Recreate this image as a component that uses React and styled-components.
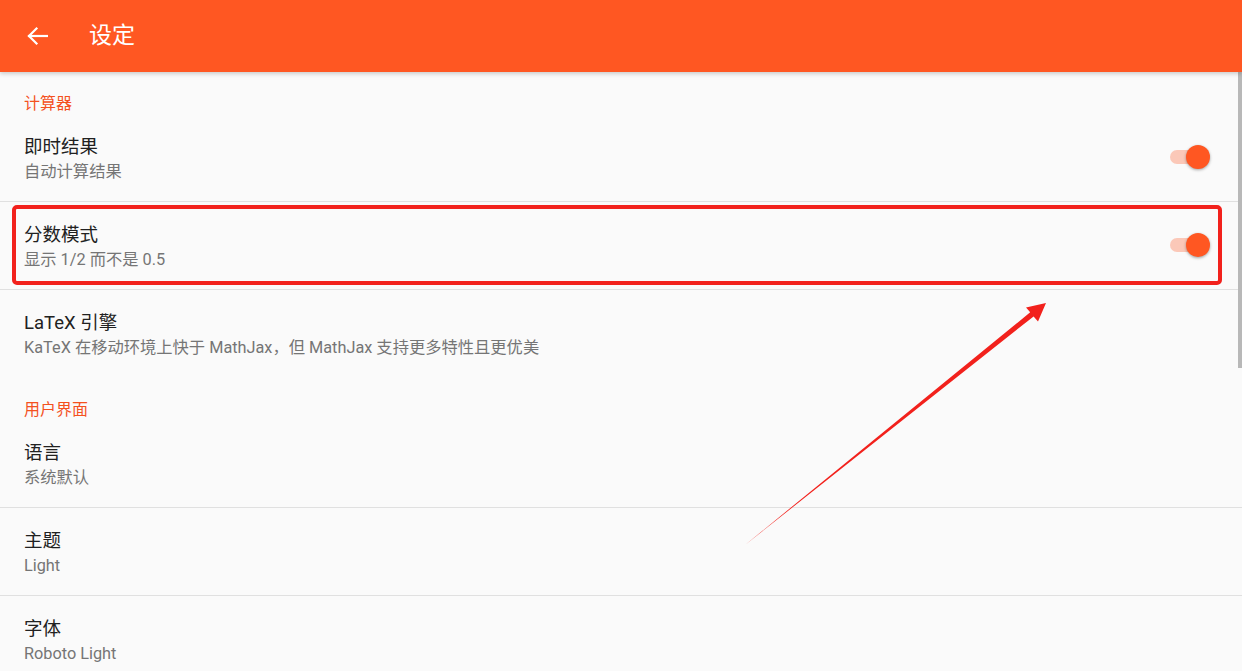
import React from 'react';
import styled, {createGlobalStyle} from 'styled-components';

const GlobalStyle = createGlobalStyle`
  html, body {
    margin: 0;
    padding: 0;
    background: #fafafa;
    overflow: hidden;
  }
  body {
    font-family: Roboto, "Noto Sans CJK SC", "Noto Sans", sans-serif;
  }
`;

const Page = styled.div`
  position: relative;
  width: 100vw;
  height: 100vh;
  display: flex;
  flex-direction: column;
  background: #fafafa;
  overflow: hidden;
`;

const AppBar = styled.header`
  height: 72px;
  flex-shrink: 0;
  display: flex;
  align-items: center;
  background: #ff5722;
  box-shadow: 0 2px 4px rgba(0, 0, 0, 0.18);
  position: relative;
  z-index: 2;
`;

const BackButton = styled.div`
  width: 24px;
  height: 24px;
  margin-left: 25px;
  display: flex;
  align-items: center;
  justify-content: center;
`;

const Title = styled.h1`
  margin: 0 0 0 40px;
  font-size: 23px;
  font-weight: 400;
  color: #fff;
  line-height: 30px;
`;

const Content = styled.main`
  position: relative;
  flex: 1;
  overflow: hidden;
`;

const Category = styled.div`
  height: 42px;
  box-sizing: border-box;
  padding: 23px 24px 0;
  font-size: 16px;
  line-height: 18px;
  color: #f4511e;
`;

const Row = styled.div`
  position: relative;
  height: 88px;
  box-sizing: border-box;
  padding: 21px 32px 0 24px;
  display: flex;
  align-items: flex-start;
  justify-content: space-between;
  border-bottom: ${({divider}) => divider ? '1px solid #e0e0e0' : '1px solid transparent'};

  ${({highlighted}) => highlighted && `
    &::after {
      content: '';
      position: absolute;
      left: 12px;
      right: 20px;
      top: 3px;
      bottom: 4px;
      border: 4px solid #f2211c;
      border-radius: 5px;
      pointer-events: none;
    }
  `}
`;

const Texts = styled.div`
  display: flex;
  flex-direction: column;
`;

const RowTitle = styled.span`
  font-size: 18.5px;
  line-height: 25px;
  color: #212121;
`;

const RowSummary = styled.span`
  font-size: 16.3px;
  line-height: 23px;
  color: #757575;
`;

const Switch = styled.div`
  position: relative;
  width: 40px;
  height: 24px;
  margin-top: 10px;
`;

const Track = styled.div`
  position: absolute;
  left: 0;
  top: 5px;
  width: 36px;
  height: 14px;
  border-radius: 7px;
  background: ${({on}) => on ? 'rgba(255, 87, 34, 0.3)' : 'rgba(0,0,0,0.26)'};
`;

const Thumb = styled.div`
  position: absolute;
  top: 0;
  ${({on}) => on ? 'right: 0;' : 'left: 0;'}
  width: 24px;
  height: 24px;
  border-radius: 50%;
  background: ${({on}) => on ? '#ff5722' : '#f1f1f1'};
  box-shadow: 0 1px 3px rgba(0, 0, 0, 0.35);
`;

const ScrollThumb = styled.div`
  position: absolute;
  right: 0;
  top: 0;
  width: 4px;
  height: 296px;
  background: #b8b8b8;
`;

const Annotation = styled.svg`
  position: absolute;
  left: 0;
  top: 0;
  width: 100%;
  height: 100%;
  pointer-events: none;
  z-index: 3;
`;

const sections = [
  {
    title: '计算器',
    items: [
      {title: '即时结果', summary: '自动计算结果', toggle: true, divider: true},
      {title: '分数模式', summary: '显示 1/2 而不是 0.5', toggle: true, divider: true, highlighted: true},
      {title: 'LaTeX 引擎', summary: 'KaTeX 在移动环境上快于 MathJax，但 MathJax 支持更多特性且更优美'},
    ],
  },
  {
    title: '用户界面',
    items: [
      {title: '语言', summary: '系统默认', divider: true},
      {title: '主题', summary: 'Light', divider: true},
      {title: '字体', summary: 'Roboto Light'},
    ],
  },
];

const App = () => {
  return (
    <Page>
      <GlobalStyle/>
      <AppBar>
        <BackButton>
          <svg width="22" height="22" viewBox="0 0 22 22" fill="none" stroke="#fff" strokeWidth="2.2" strokeLinecap="square">
            <path d="M21 11H3"/>
            <path d="M10.5 3.5L3 11l7.5 7.5"/>
          </svg>
        </BackButton>
        <Title>设定</Title>
      </AppBar>
      <Content>
        {sections.map((section) => (
          <div key={section.title}>
            <Category>{section.title}</Category>
            {section.items.map((item) => (
              <Row key={item.title} divider={item.divider} highlighted={item.highlighted}>
                <Texts>
                  <RowTitle>{item.title}</RowTitle>
                  <RowSummary>{item.summary}</RowSummary>
                </Texts>
                {item.toggle && (
                  <Switch>
                    <Track on/>
                    <Thumb on/>
                  </Switch>
                )}
              </Row>
            ))}
          </div>
        ))}
        <ScrollThumb/>
      </Content>
      <Annotation viewBox="0 0 1242 671">
        <polygon
          fill="#f2211c"
          points="745,545 1033.6,316.4 1038,321.5 1046,303 1026,307.5 1030.2,312.3"
        />
      </Annotation>
    </Page>
  );
};

export default App;
